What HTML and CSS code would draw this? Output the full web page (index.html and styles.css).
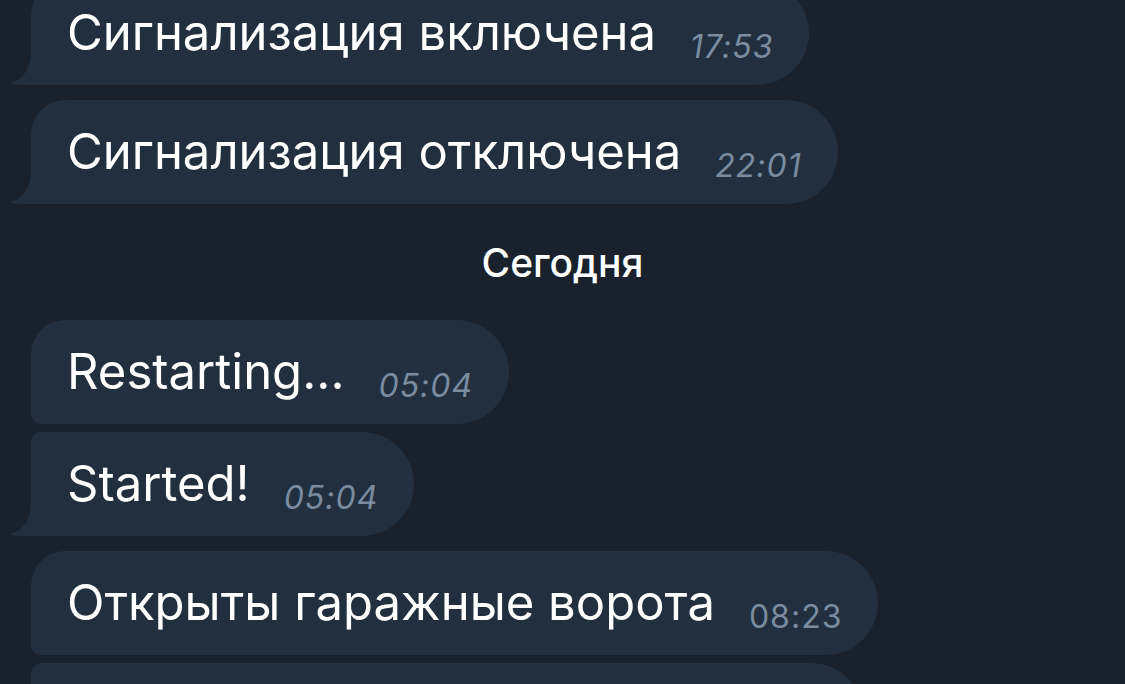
FILE: index.html
```html
<!DOCTYPE html>
<html lang="ru">
<head>
    <meta charset="UTF-8">
    <meta name="viewport" content="width=device-width, initial-scale=1.0">
    <title>Чат</title>
    <link rel="stylesheet" href="styles.css">
</head>
<body>
    <div class="chat">
        <div class="group first-group">
            <div class="bubble tail">
                Сигнализация включена<span class="time">17:53</span>
                <svg class="tail-shape" viewBox="0 0 24 36" width="24" height="36"><path d="M20 0 C20 17 15 28 1 33.5 C0 34 0 35.5 2 35.6 C10 36.3 18 36 24 36 L24 0 Z"/></svg>
            </div>
        </div>
        <div class="group">
            <div class="bubble tail">
                Сигнализация отключена<span class="time">22:01</span>
                <svg class="tail-shape" viewBox="0 0 24 36" width="24" height="36"><path d="M20 0 C20 17 15 28 1 33.5 C0 34 0 35.5 2 35.6 C10 36.3 18 36 24 36 L24 0 Z"/></svg>
            </div>
        </div>

        <div class="date">Сегодня</div>

        <div class="group no-top">
            <div class="bubble joined-bottom">
                Restarting...<span class="time">05:04</span>
            </div>
            <div class="bubble joined-top tail">
                Started!<span class="time">05:04</span>
                <svg class="tail-shape" viewBox="0 0 24 36" width="24" height="36"><path d="M20 0 C20 17 15 28 1 33.5 C0 34 0 35.5 2 35.6 C10 36.3 18 36 24 36 L24 0 Z"/></svg>
            </div>
        </div>
        <div class="group">
            <div class="bubble joined-bottom upright">
                Открыты гаражные ворота<span class="time">08:23</span>
            </div>
            <!-- next message, only its top edge is on screen -->
            <div class="bubble joined-top next"></div>
        </div>
    </div>
</body>
</html>
```

FILE: styles.css
```css
body {
    margin: 0;
    background: #18212c;
    color: #fff;
    font-family: 'Inter', 'Noto Sans', sans-serif;
    height: 100vh;
    overflow: hidden; /* chat keeps going past the bottom */
}

.chat {
    display: flex;
    flex-direction: column;
    padding-left: 31px;
}

.group {
    display: flex;
    flex-direction: column;
    align-items: flex-start;
    gap: 8px;
    margin-top: 15px;
}

.first-group {
    margin-top: -19px; /* first bubble is cut off by the top edge */
}

.no-top {
    margin-top: 0;
}

.bubble {
    position: relative;
    background: #212f3f;
    font-size: 49px;
    line-height: 58px;
    padding: 23px 36px;
    border-radius: 34px 52px 52px 34px;
    white-space: nowrap;
}

.bubble.joined-bottom {
    border-bottom-left-radius: 10px;
}

.bubble.joined-top {
    border-top-left-radius: 10px;
}

.bubble.tail {
    border-bottom-left-radius: 0;
}

.bubble.next {
    width: 760px;
    height: 58px;
}

.tail-shape {
    position: absolute;
    left: -20px;
    bottom: 0;
    fill: #212f3f;
}

.time {
    display: inline-block;
    margin-left: 34px;
    font-size: 32px;
    line-height: 20px;
    font-style: italic;
    color: #7b8c9f;
    letter-spacing: 1px;
    vertical-align: -8px;
}

.upright .time {
    font-style: normal;
}

.date {
    text-align: center;
    font-size: 39px;
    font-weight: 500;
    line-height: 46px;
    padding: 36px 0 34px;
    margin-right: 31px;
    color: #fff;
}
```
